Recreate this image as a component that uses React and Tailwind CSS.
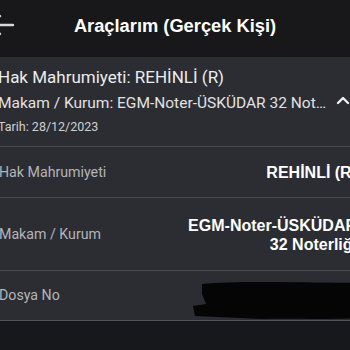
import React from "react";

export default function App() {
  const font = { fontFamily: 'Roboto, "Liberation Sans", Arial, sans-serif' };
  const arial = { fontFamily: '"Liberation Sans", Arial, sans-serif' };
  return (
    <div className="w-[350px] h-[350px] overflow-hidden bg-[#17181c] relative" style={font}>
      <div className="h-[57px] bg-[#18181b] relative flex items-center justify-center">
        <svg className="absolute left-[-12px] top-[14px]" width="28" height="24" viewBox="0 0 28 24">
          <path d="M3 11 H25 M12 2 L3 11 L12 20" stroke="#d8d8d8" strokeWidth="2.4" fill="none" strokeLinecap="round" strokeLinejoin="round" />
        </svg>
        <div className="text-white font-bold text-[18.3px] -mt-[6px]" style={arial}>Araçlarım (Gerçek Kişi)</div>
      </div>
      <div className="-ml-[4px] w-[366px] bg-[#2b2d33] border-b border-[#50535b]">
        <div className="relative h-[90px] pl-[2px] pt-[8px] border-b border-[#484b53]">
          <div className="text-[17px] text-[#ececec] leading-[24px]">Hak Mahrumiyeti: REHİNLİ (R)</div>
          <div className="text-[15.5px] text-[#e2e2e2] leading-[22px] mt-[3px]">Makam / Kurum: EGM-Noter-ÜSKÜDAR 32 Not…</div>
          <div className="text-[12.5px] text-[#cfcfcf] leading-[18px] mt-[4px]">Tarih: 28/12/2023</div>
          <svg className="absolute left-[340px] top-[38px]" width="14" height="10" viewBox="0 0 14 10">
            <path d="M2 8 L7 3 L12 8" stroke="#f0f0f0" strokeWidth="2.4" fill="none" strokeLinecap="round" strokeLinejoin="round" />
          </svg>
        </div>
        <div className="h-[51px] flex items-center justify-between pl-[3px] pr-[5px] pt-[2px] border-b border-[#484b53]">
          <span className="text-[14.2px] text-[#b4b5b9]">Hak Mahrumiyeti</span>
          <span className="text-[16px] text-white font-bold" style={arial}>REHİNLİ (R)</span>
        </div>
        <div className="h-[73px] flex items-center justify-between pl-[3px] pr-[5px] pt-[2px] border-b border-[#484b53]">
          <span className="text-[14.2px] text-[#b4b5b9]">Makam / Kurum</span>
          <span className="text-[16px] text-white font-bold text-right leading-[19px]" style={arial}>EGM-Noter-ÜSKÜDAR<br />32 Noterliği</span>
        </div>
        <div className="h-[49px] flex items-center justify-between pl-[3px] pr-[5px] pt-[1px] relative">
          <span className="text-[14.2px] text-[#b4b5b9]">Dosya No</span>
          <svg className="absolute left-[196px] top-[9px]" width="170" height="40" viewBox="0 0 170 40">
            <path d="M10 4 C40 1 90 2 170 3 L170 38 C130 40 100 38 70 39 L3 36 L1 26 L14 24 L10 14 Z" fill="#050505" />
          </svg>
        </div>
      </div>
    </div>
  );
}
